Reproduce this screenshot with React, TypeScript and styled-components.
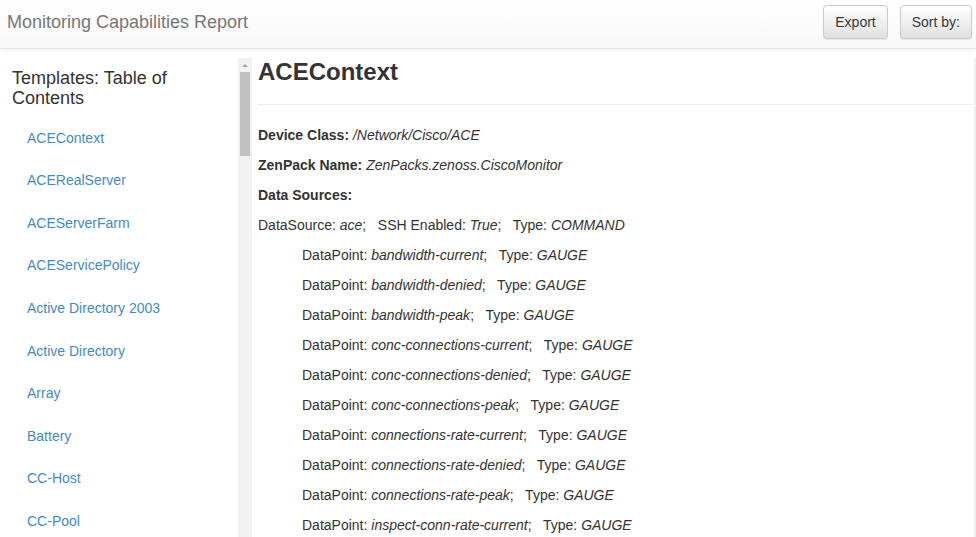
import React from "react";
import styled, { createGlobalStyle } from "styled-components";

const Global = createGlobalStyle`
  html, body { margin: 0; padding: 0; overflow: hidden; background: #fff; }
  body { font-family: "Liberation Sans", Arial, Helvetica, sans-serif; font-size: 14px; line-height: 20px; color: #333; }
  * { box-sizing: border-box; }
`;

const Navbar = styled.header`
  height: 49px;
  display: flex;
  align-items: center;
  justify-content: space-between;
  padding: 0 4px 5px 7px;
  background-image: linear-gradient(to bottom, #ffffff 0, #f8f8f8 100%);
  border-bottom: 1px solid #e7e7e7;
  box-shadow: 0 1px 5px rgba(0, 0, 0, 0.075);
  position: relative;
  z-index: 1;
`;

const Brand = styled.div`
  font-size: 18px;
  line-height: 20px;
  color: #777;
`;

const Actions = styled.div`
  display: flex;
  gap: 12px;
`;

const Button = styled.button`
  font-family: inherit;
  font-size: 14px;
  line-height: 20px;
  padding: 6px 11px;
  color: #333;
  border: 1px solid #ccc;
  border-radius: 4px;
  background-image: linear-gradient(to bottom, #ffffff 0, #e0e0e0 100%);
  text-shadow: 0 1px 0 #fff;
  box-shadow: inset 0 1px 0 rgba(255, 255, 255, 0.15), 0 1px 1px rgba(0, 0, 0, 0.075);
  cursor: pointer;
`;

const Body = styled.div`
  display: flex;
  margin-top: 9px;
  height: calc(100vh - 58px);
`;

const Sidebar = styled.nav`
  width: 252px;
  flex: none;
  height: 100%;
  display: flex;
`;

const SidebarContent = styled.div`
  flex: 1;
  overflow: hidden;
  padding: 11px 0 0 12px;
`;

const ScrollTrack = styled.div`
  width: 14px;
  flex: none;
  background: #f1f1f1;
  display: flex;
  flex-direction: column;
  align-items: center;
`;

const ScrollArrow = styled.div`
  height: 14px;
  width: 14px;
  display: flex;
  align-items: center;
  justify-content: center;
  &::before {
    content: "";
    width: 0;
    height: 0;
    border-left: 3px solid transparent;
    border-right: 3px solid transparent;
    border-bottom: 3px solid #a3a3a3;
  }
`;

const ScrollThumb = styled.div`
  width: 10px;
  height: 84px;
  background: #c1c1c1;
`;

const TocTitle = styled.h3`
  margin: 0 0 8px;
  width: 200px;
  font-size: 18px;
  font-weight: normal;
  line-height: 19.8px;
  color: #333;
`;

const TocList = styled.ul`
  list-style: none;
  margin: 0;
  padding: 0;
`;

const TocItem = styled.li`
  padding: 11.28px 0 11.28px 15px;
  line-height: 20px;
`;

const TocLink = styled.a`
  color: #428bca;
  text-decoration: none;
`;

const Main = styled.main`
  flex: 1;
  height: 100%;
  overflow: hidden;
  padding: 1px 0 0 6px;
  border-right: 2px solid #f0f0f0;
`;

const Title = styled.h1`
  margin: 0 0 20px;
  padding-bottom: 19px;
  font-size: 24px;
  line-height: 26.4px;
  font-weight: bold;
  color: #333;
  border-bottom: 1px solid #eee;
`;

const Row = styled.p<{ $indent?: boolean }>`
  margin: 0 0 10px;
  padding-left: ${(p) => (p.$indent ? "44px" : "0")};
  line-height: 20px;
  white-space: pre;
`;

const Label = styled.b`
  font-weight: bold;
`;

const Val = styled.i`
  font-style: italic;
`;

const templates = [
  "ACEContext", "ACERealServer", "ACEServerFarm", "ACEServicePolicy",
  "Active Directory 2003", "Active Directory", "Array", "Battery", "CC-Host",
  "CC-Pool",
];

const dataPoints = [
  "bandwidth-current", "bandwidth-denied", "bandwidth-peak",
  "conc-connections-current", "conc-connections-denied", "conc-connections-peak",
  "connections-rate-current", "connections-rate-denied", "connections-rate-peak",
  "inspect-conn-rate-current",
];

const SEP = ";\u00a0\u00a0 ";

export default function App() {
  return (
    <>
      <Global />
      <Navbar>
        <Brand>Monitoring Capabilities Report</Brand>
        <Actions>
          <Button>Export</Button>
          <Button>Sort by:</Button>
        </Actions>
      </Navbar>
      <Body>
        <Sidebar>
          <SidebarContent>
            <TocTitle>Templates: Table of Contents</TocTitle>
            <TocList>
              {templates.map((t) => (
                <TocItem key={t}>
                  <TocLink href="#">{t}</TocLink>
                </TocItem>
              ))}
            </TocList>
          </SidebarContent>
          <ScrollTrack>
            <ScrollArrow />
            <ScrollThumb />
          </ScrollTrack>
        </Sidebar>
        <Main>
          <Title>ACEContext</Title>
          <Row>
            <Label>Device Class:</Label> <Val>/Network/Cisco/ACE</Val>
          </Row>
          <Row>
            <Label>ZenPack Name:</Label> <Val>ZenPacks.zenoss.CiscoMonitor</Val>
          </Row>
          <Row>
            <Label>Data Sources:</Label>
          </Row>
          <Row>
            DataSource: <Val>ace</Val>{SEP}SSH Enabled: <Val>True</Val>{SEP}Type: <Val>COMMAND</Val>
          </Row>
          {dataPoints.map((d) => (
            <Row $indent key={d}>
              DataPoint: <Val>{d}</Val>{SEP}Type: <Val>GAUGE</Val>
            </Row>
          ))}
        </Main>
      </Body>
    </>
  );
}
